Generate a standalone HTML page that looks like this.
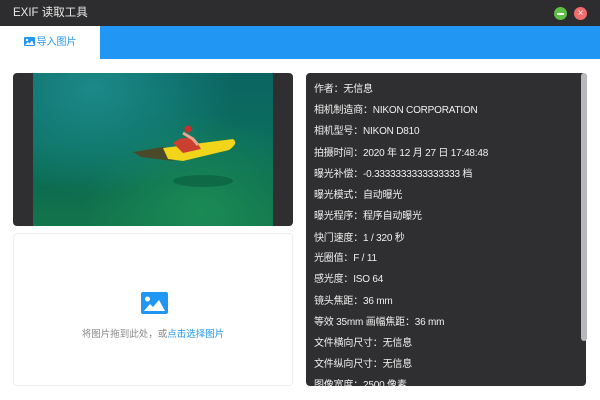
<!DOCTYPE html>
<html><head><meta charset="utf-8"><style>
*{margin:0;padding:0;box-sizing:border-box}
body{width:600px;height:400px;background:#fff;font-family:"Liberation Sans","Noto Sans CJK SC",sans-serif;position:relative;overflow:hidden}
.title{position:absolute;left:0;top:0;width:600px;height:26px;background:#2d2d2f;color:#e8e8e8;font-size:11.5px;line-height:26px;padding-left:13px}
.btn{position:absolute;top:7px;width:13px;height:13px;border-radius:50%}
.tabs{position:absolute;top:26px;left:0;width:600px;height:33px;background:#2196f3}
.tab{position:absolute;left:0;top:0;width:100px;height:33px;background:#fff;color:#2196f3;font-size:10px;line-height:33px;text-align:center}
.img{position:absolute;left:13px;top:73px;width:280px;height:153px;background:#2f2f31;border-radius:4px;overflow:hidden}
.photo{position:absolute;left:20px;top:0;width:240px;height:153px;background:radial-gradient(ellipse at 25% 10%,#1b8a88,transparent 55%),radial-gradient(ellipse at 70% 90%,#1b8a55,transparent 50%),linear-gradient(180deg,#0b6462 0%,#0b6e5e 45%,#0c6c50 75%,#13754a 100%)}
.drop{position:absolute;left:13px;top:233px;width:280px;height:153px;border:1px solid #eee;border-radius:4px;text-align:center}
.info{position:absolute;left:306px;top:73px;width:280px;height:313px;background:#2f2f31;border-radius:4px;overflow:hidden;color:#f0f0f0;font-size:10px}
.info div{position:absolute;left:8px;white-space:nowrap;letter-spacing:-0.2px}
.sb{position:absolute;left:581px;top:73px;width:6px;height:268px;background:#b8b8bc;border-radius:3px}
</style></head><body>
<div class="title">EXIF 读取工具</div>
<div class="btn" style="left:554px;background:#5ec043"><div style="position:absolute;left:3px;top:6px;width:7px;height:1.5px;background:#fff"></div></div>
<div class="btn" style="left:574px;background:#f36c6c;color:#fff;font-size:10px;line-height:13px;text-align:center">×</div>
<div class="tabs"><div class="tab"><svg width="11" height="9" viewBox="0 0 11 9" style="vertical-align:-1px;margin-right:2px"><rect width="11" height="9" rx="1" fill="#2196f3"/><circle cx="3" cy="3" r="1.2" fill="#fff"/><path d="M1 8 L4 5 L5.5 6.5 L8 3.5 L10 8 Z" fill="#fff"/></svg>导入图片</div></div>
<div class="img"><div class="photo">
<svg width="240" height="153" style="position:absolute;left:0;top:0">
<path d="M100 79 L130 74 L148 76 L140 88 L108 84 Z" fill="#4a4a2a"/>
<path d="M130 75 L200 66 Q206 70 196 77 L150 88 L135 86 Z" fill="#f0d51a"/>
<path d="M140 70 Q150 62 162 66 L168 76 L150 80 Z" fill="#c94030"/>
<circle cx="155" cy="56" r="3.5" fill="#c9302a"/>
<path d="M150 60 L160 66 L165 72" stroke="#e8a890" stroke-width="3" fill="none"/>
<ellipse cx="170" cy="108" rx="30" ry="6" fill="#0a5a40" opacity=".6"/>
</svg></div></div>
<div class="drop">
<svg width="27" height="22" style="position:absolute;left:127px;top:58px" viewBox="0 0 27 22"><rect width="27" height="22" rx="2" fill="#2196f3"/><circle cx="6.5" cy="7" r="2.5" fill="#fff"/><path d="M3 19 L9 12 L12 15 L18 8 L24 19 Z" fill="#fff"/></svg>
<div style="position:absolute;left:0;right:0;top:92px;font-size:9.5px;color:#888">将图片拖到此处，或<span style="color:#2196f3">点击选择图片</span></div>
</div>
<div class="info">
<div style="top:7px">作者：无信息</div>
<div style="top:28px">相机制造商：NIKON CORPORATION</div>
<div style="top:49px">相机型号：NIKON D810</div>
<div style="top:71px">拍摄时间：2020 年 12 月 27 日 17:48:48</div>
<div style="top:92px">曝光补偿：-0.3333333333333333 档</div>
<div style="top:113px">曝光模式：自动曝光</div>
<div style="top:134px">曝光程序：程序自动曝光</div>
<div style="top:156px">快门速度：1 / 320 秒</div>
<div style="top:176px">光圈值：F / 11</div>
<div style="top:197px">感光度：ISO 64</div>
<div style="top:219px">镜头焦距：36 mm</div>
<div style="top:240px">等效 35mm 画幅焦距：36 mm</div>
<div style="top:261px">文件横向尺寸：无信息</div>
<div style="top:282px">文件纵向尺寸：无信息</div>
<div style="top:303px">图像宽度：2500 像素</div>
</div>
<div class="sb"></div>
</body></html>
